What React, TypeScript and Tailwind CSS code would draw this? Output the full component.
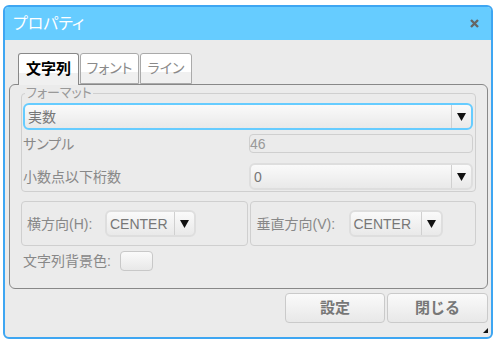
import React from "react"

const font = "[font-family:'Liberation_Sans','Noto_Sans_CJK_JP',sans-serif]"

const Arrow = () => (
  <div className="w-[20px] h-full border-l border-[#d0d0d0] flex items-center justify-center">
    <svg width="9" height="9" viewBox="0 0 9 9">
      <polygon points="0,1 9,1 4.5,9" fill="#111" />
    </svg>
  </div>
)

const Select = ({ value, width, focus }: { value: string; width: string; focus?: boolean }) => (
  <div
    className={`${width} h-[27px] flex items-center rounded-[6px] bg-[linear-gradient(#fafafa,#e9e9e9)] ${
      focus ? "border-2 border-[#66ccff]" : "border-2 border-[#dedede]"
    }`}
  >
    <div className="flex-1 pl-[3px] text-[14px] text-[#777] leading-none">{value}</div>
    <Arrow />
  </div>
)

export default function App() {
  return (
    <div className={`w-[495px] h-[342px] bg-white pt-[5px] pl-[3px] ${font}`}>
      <div className="relative w-[490px] h-[334px] border-2 border-[#3ea6f2] rounded-[6px] bg-[#ebebeb] overflow-hidden">
        {/* title bar */}
        <div className="h-[33px] bg-[#66ccff] flex items-center justify-between pl-[8px] pr-[12px]">
          <span className="text-white text-[16px] [font-feature-settings:'palt']">プロパティ</span>
          <svg width="9" height="9" viewBox="0 0 9 9">
            <path d="M1 1 L8 8 M8 1 L1 8" stroke="#666" strokeWidth="2.4" />
          </svg>
        </div>

        <div className="pl-[4px] pt-[13px]">
          {/* tabs */}
          <div className="relative z-10 flex gap-[1px] ml-[9px] h-[32px] -mb-[1px]">
            <div className="w-[61px] border border-b-0 border-[#888] rounded-t-[3px] bg-[linear-gradient(#fff_62%,#f0f0f0_62%)] flex items-center justify-center">
              <span className="text-[15px] font-bold text-black">文字列</span>
            </div>
            <div className="w-[59px] h-[31px] border border-[#aaa] rounded-t-[3px] bg-[linear-gradient(#fff_62%,#f0f0f0_62%)] flex items-center justify-center">
              <span className="text-[14px] text-[#8a8a8a] [font-feature-settings:'palt']">フォント</span>
            </div>
            <div className="w-[52px] h-[31px] border border-[#aaa] rounded-t-[3px] bg-[linear-gradient(#fff_62%,#f0f0f0_62%)] flex items-center justify-center">
              <span className="text-[14px] text-[#8a8a8a] [font-feature-settings:'palt']">ライン</span>
            </div>
          </div>

          {/* panel */}
          <div className="w-[479px] h-[205px] border border-[#888] rounded-[6px] px-[11px] pt-[1px]">
            <fieldset className="border border-[#cfcfcf] rounded-[4px] pl-[1px] pr-[2px] pb-[1px]">
              <legend className="ml-[2px] px-[1px] text-[13px] leading-[14px] text-[#999] [font-feature-settings:'palt']">
                フォーマット
              </legend>
              <div className="mt-[3px]">
                <Select value="実数" width="w-[450px]" focus />
              </div>
              <div className="grid grid-cols-[226px_224px] items-center mt-[4px]">
                <span className="text-[14px] text-[#888] leading-none [font-feature-settings:'palt']">サンプル</span>
                <div className="h-[19px] border border-[#cfcfcf] rounded-[4px] flex items-center text-[14px] text-[#999] leading-none">46</div>
              </div>
              <div className="grid grid-cols-[226px_224px] items-center mt-[10px]">
                <span className="text-[14px] text-[#888] leading-none">小数点以下桁数</span>
                <Select value="0" width="w-[224px]" />
              </div>
            </fieldset>

            <div className="flex gap-[2px] mt-[9px]">
              <div className="w-[227px] h-[45px] border border-[#cfcfcf] rounded-[4px] flex items-center pl-[5px]">
                <span className="w-[78px] text-[14px] text-[#888] leading-none">横方向(H):</span>
                <Select value="CENTER" width="w-[91px]" />
              </div>
              <div className="w-[227px] h-[45px] border border-[#cfcfcf] rounded-[4px] flex items-center pl-[6px]">
                <span className="w-[92px] text-[14px] text-[#888] leading-none">垂直方向(V):</span>
                <Select value="CENTER" width="w-[94px]" />
              </div>
            </div>

            <div className="flex items-center mt-[5px] pl-[2px]">
              <span className="w-[97px] text-[14px] text-[#888] leading-none">文字列背景色:</span>
              <div className="w-[33px] h-[20px] border border-[#c8c8c8] rounded-[4px] bg-[linear-gradient(#fafafa,#e8e8e8)]" />
            </div>
          </div>

          {/* buttons */}
          <div className="flex justify-end gap-[2px] mt-[4px] pr-[3px]">
            <button className="w-[100px] h-[30px] border border-[#cacaca] rounded-[4px] bg-[linear-gradient(#fafafa,#e8e8e8)] text-[15px] font-bold text-[#777]">
              設定
            </button>
            <button className="w-[101px] h-[30px] border border-[#cacaca] rounded-[4px] bg-[linear-gradient(#fafafa,#e8e8e8)] text-[15px] font-bold text-[#777]">
              閉じる
            </button>
          </div>
        </div>

        {/* resize grip */}
        <svg className="absolute right-[3px] bottom-[4px]" width="5" height="5" viewBox="0 0 5 5">
          <polygon points="5,0 5,5 0,5" fill="#111" />
        </svg>
      </div>
    </div>
  )
}
